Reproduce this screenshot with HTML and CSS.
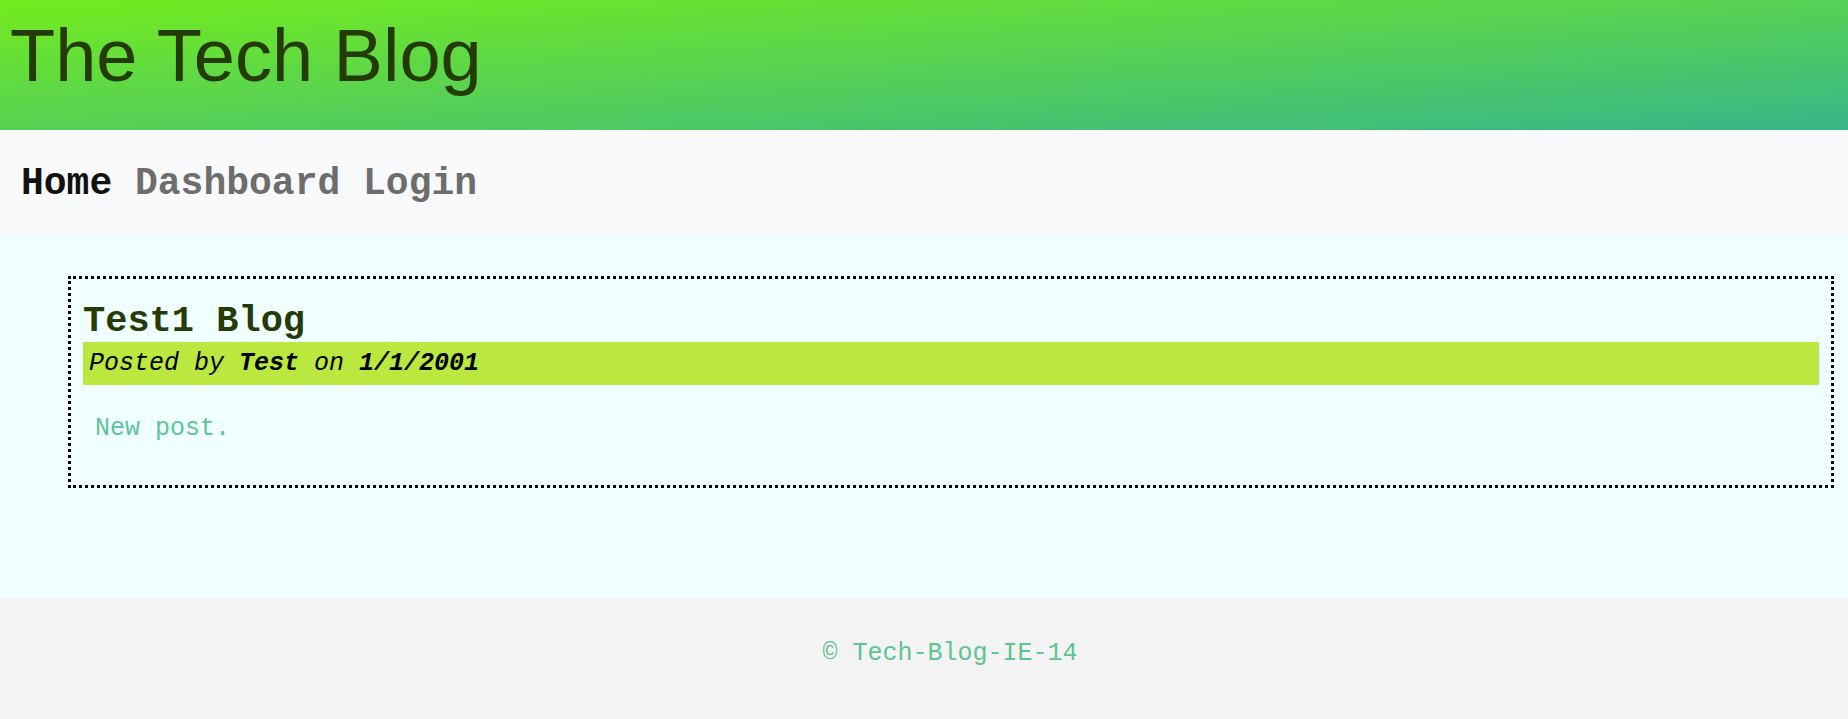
FILE: index.html
```html
<!DOCTYPE html>
<html lang="en">
<head>
<meta charset="utf-8">
<title>The Tech Blog</title>
<link rel="stylesheet" href="styles.css">
</head>
<body>
<header class="site-header">
  <h1 class="site-title">The Tech Blog</h1>
</header>
<nav class="site-nav">
  <a class="nav-link active" href="#">Home</a>
  <a class="nav-link" href="#">Dashboard</a>
  <a class="nav-link" href="#">Login</a>
</nav>
<main class="site-main">
  <article class="post">
    <h2 class="post-title">Test1 Blog</h2>
    <div class="post-meta">Posted by <b>Test</b> on <b>1/1/2001</b></div>
    <p class="post-body">New post.</p>
  </article>
</main>
<footer class="site-footer">© Tech-Blog-IE-14</footer>
</body>
</html>
```
FILE: styles.css
```css
* { box-sizing: border-box; }
html, body { margin: 0; padding: 0; }
body {
  font-family: "Liberation Mono", "Courier New", monospace;
  background: #f3f3f3;
}
.site-header {
  height: 130px;
  padding: 13px 10px 0;
  background: linear-gradient(to bottom right, #74ec1e, #38b689);
}
.site-title {
  margin: 0;
  font-family: "Liberation Sans", Arial, sans-serif;
  font-weight: 400;
  font-size: 74px;
  line-height: normal;
  color: #243a07;
}
.site-nav {
  display: flex;
  height: 106px;
  align-items: center;
  padding: 0 21px;
  background: #f8f9fb;
  white-space: pre;
}
.nav-link {
  font-family: "Liberation Mono", "Courier New", monospace;
  font-weight: 700;
  font-size: 38px;
  color: #6d6d6d;
  text-decoration: none;
  margin-right: 22.8px;
}
.nav-link.active { color: #111111; }
.site-main {
  background: #f0ffff;
  padding: 40px 14px 110px 68px;
}
.post {
  border: 3px dotted #000;
  padding: 21px 12px 42px;
}
.post-title {
  margin: 0;
  font-size: 37px;
  font-weight: 700;
  line-height: normal;
  color: #253b08;
}
.post-meta {
  background: #bbe83f;
  font-size: 25px;
  font-style: italic;
  line-height: normal;
  padding: 7px 6px;
  height: 43px;
  color: #000;
}
.post-meta b { font-weight: 700; }
.post-body {
  margin: 29px 0 0;
  padding: 0 12px;
  font-size: 25px;
  line-height: normal;
  color: #5ec49a;
}
.site-footer {
  background: #f3f3f3;
  text-align: center;
  padding: 41px 0 57px 52px;
  font-size: 25px;
  line-height: normal;
  color: #5ec490;
}
```
